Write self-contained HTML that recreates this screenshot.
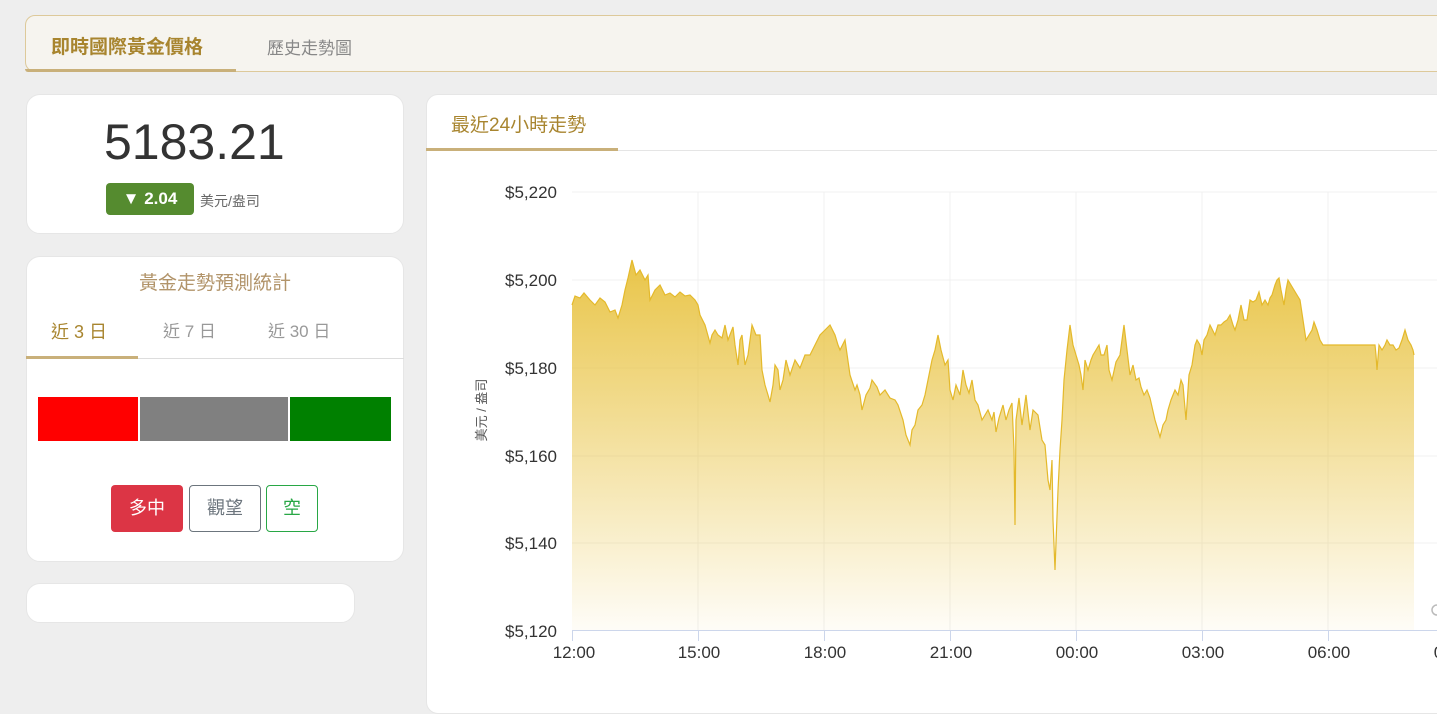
<!DOCTYPE html>
<html><head><meta charset="utf-8"><style>
*{box-sizing:border-box;margin:0;padding:0}
body{width:1437px;height:685px;overflow:hidden;background:#eeeeee;font-family:"Liberation Sans","Noto Sans CJK TC",sans-serif;position:relative}
.abs{position:absolute}
.card{position:absolute;background:#fff;border-radius:14px;border:1px solid #e6e6e6}
</style></head><body>
<div class="abs" style="left:25px;top:15px;width:1440px;height:57px;background:#f6f4ef;border:1px solid #ddc99a;border-radius:10px"></div>
<div class="abs" style="left:25px;top:69px;width:211px;height:3px;background:#c9b07a;border-radius:0 0 0 8px"></div>
<div class="abs" style="left:51px;top:32px;font-size:19px;font-weight:bold;color:#a8852f">即時國際黃金價格</div>
<div class="abs" style="left:267px;top:34px;font-size:17px;color:#888">歷史走勢圖</div>

<div class="card" style="left:26px;top:94px;width:378px;height:140px"></div>
<div class="abs" style="left:104px;top:113px;font-size:50px;color:#333">5183.21</div>
<div class="abs" style="left:106px;top:183px;width:88px;height:32px;background:#558b2f;border-radius:4px;color:#fff;font-weight:bold;font-size:17px;line-height:32px;text-align:center">▼ 2.04</div>
<div class="abs" style="left:200px;top:191px;font-size:14px;color:#666">美元/盎司</div>

<div class="card" style="left:26px;top:256px;width:378px;height:306px"></div>
<div class="abs" style="left:26px;top:268px;width:378px;text-align:center;font-size:19px;color:#b2946a">黃金走勢預測統計</div>
<div class="abs" style="left:51px;top:318px;font-size:18px;color:#a8852f">近 3 日</div>
<div class="abs" style="left:163px;top:317px;font-size:17px;color:#999">近 7 日</div>
<div class="abs" style="left:268px;top:317px;font-size:17px;color:#999">近 30 日</div>
<div class="abs" style="left:26px;top:358px;width:378px;height:1px;background:#ddd"></div>
<div class="abs" style="left:26px;top:356px;width:112px;height:3px;background:#c9b07a"></div>
<div class="abs" style="left:38px;top:397px;width:100px;height:44px;background:#f00"></div>
<div class="abs" style="left:140px;top:397px;width:148px;height:44px;background:#808080"></div>
<div class="abs" style="left:290px;top:397px;width:101px;height:44px;background:#008000"></div>
<div class="abs" style="left:111px;top:485px;width:72px;height:47px;background:#dc3545;border-radius:4px;color:#fff;font-size:18px;line-height:47px;text-align:center">多中</div>
<div class="abs" style="left:189px;top:485px;width:72px;height:47px;border:1px solid #6c757d;border-radius:4px;color:#6c757d;font-size:18px;line-height:45px;text-align:center">觀望</div>
<div class="abs" style="left:266px;top:485px;width:52px;height:47px;border:1px solid #28a745;border-radius:4px;color:#28a745;font-size:18px;line-height:45px;text-align:center">空</div>

<div class="card" style="left:26px;top:583px;width:329px;height:40px"></div>

<div class="card" style="left:426px;top:94px;width:1030px;height:620px;border-radius:12px"></div>
<div class="abs" style="left:451px;top:110px;font-size:19px;color:#a8852f">最近24小時走勢</div>
<div class="abs" style="left:427px;top:150px;width:1010px;height:1px;background:#e5e5e5"></div>
<div class="abs" style="left:426px;top:148px;width:192px;height:3px;background:#c9b07a"></div>

<svg class="abs" style="left:0;top:0" width="1437" height="685" font-family="Liberation Sans, sans-serif">
<defs><linearGradient id="g" gradientUnits="userSpaceOnUse" x1="0" y1="260" x2="0" y2="630"><stop offset="0" stop-color="#e8c23f" stop-opacity="0.95"/><stop offset="1" stop-color="#e8c23f" stop-opacity="0.04"/></linearGradient></defs>
<g stroke="#f0f0f0" stroke-width="1">
<line x1="572" y1="192" x2="1437" y2="192"/><line x1="572" y1="280" x2="1437" y2="280"/><line x1="572" y1="368" x2="1437" y2="368"/><line x1="572" y1="456" x2="1437" y2="456"/><line x1="572" y1="543" x2="1437" y2="543"/>
<line x1="698" y1="192" x2="698" y2="630"/><line x1="824" y1="192" x2="824" y2="630"/><line x1="950" y1="192" x2="950" y2="630"/><line x1="1076" y1="192" x2="1076" y2="630"/><line x1="1202" y1="192" x2="1202" y2="630"/><line x1="1328" y1="192" x2="1328" y2="630"/>
</g>
<polygon fill="url(#g)" points="572,630 572,305 575,296 580,298 584,293 590,300 595,305 600,298 605,302 610,312 615,310 618,318 622,305 625,290 628,278 632,260 636,275 640,270 645,280 648,275 650,300 655,290 660,285 665,295 670,293 675,297 680,292 685,296 690,295 695,300 698,305 700,315 705,325 710,343 712,335 715,330 718,335 722,338 725,325 728,340 733,327 735,345 738,365 740,340 742,335 745,365 748,355 752,325 756,335 760,335 762,370 765,385 768,395 770,402 773,385 775,365 778,370 780,390 783,380 786,360 790,375 795,360 800,368 805,355 810,355 815,345 820,335 825,330 830,325 835,335 838,345 840,350 845,340 850,375 855,390 857,385 860,395 862,410 866,395 870,388 872,380 877,387 880,395 885,390 890,398 895,400 898,405 903,420 906,435 910,445 912,430 915,425 918,410 922,405 925,395 928,380 932,360 935,350 938,335 941,350 945,365 948,360 950,390 953,400 956,385 960,395 963,370 966,385 969,393 972,380 975,400 978,405 982,420 985,415 988,410 992,420 994,412 996,432 999,418 1003,405 1006,420 1009,410 1012,403 1014,450 1015,525 1016,420 1019,398 1022,425 1024,410 1026,395 1030,430 1033,410 1038,415 1042,440 1045,445 1048,480 1050,490 1052,460 1053,520 1055,570 1058,490 1060,450 1062,420 1064,380 1067,350 1070,325 1073,345 1076,355 1079,365 1081,375 1083,390 1085,360 1088,370 1091,360 1093,355 1096,350 1099,345 1101,355 1104,355 1107,345 1109,370 1112,380 1116,362 1120,355 1122,340 1124,325 1127,350 1130,375 1133,365 1136,380 1139,378 1141,387 1144,395 1147,390 1150,398 1155,420 1158,430 1160,437 1163,425 1166,420 1168,410 1171,400 1175,390 1178,395 1181,380 1183,385 1186,420 1189,375 1192,365 1195,345 1197,340 1200,345 1202,355 1204,340 1207,335 1210,325 1215,335 1218,325 1221,325 1224,322 1227,320 1230,315 1233,325 1235,330 1238,320 1241,305 1244,320 1247,320 1250,300 1253,302 1256,300 1259,292 1262,305 1265,300 1268,305 1270,298 1272,295 1275,285 1277,280 1279,278 1281,290 1284,305 1286,290 1288,280 1291,285 1294,290 1297,295 1300,300 1303,320 1306,340 1309,335 1312,330 1314,322 1317,330 1320,340 1323,345 1326,345 1375,345 1376,355 1377,370 1379,345 1382,350 1385,345 1387,340 1390,345 1393,345 1396,350 1399,348 1402,340 1405,330 1408,340 1411,345 1413,350 1414,355 1414,630"/>
<polyline fill="none" stroke="#e4b92b" stroke-width="1.2" points="572,305 575,296 580,298 584,293 590,300 595,305 600,298 605,302 610,312 615,310 618,318 622,305 625,290 628,278 632,260 636,275 640,270 645,280 648,275 650,300 655,290 660,285 665,295 670,293 675,297 680,292 685,296 690,295 695,300 698,305 700,315 705,325 710,343 712,335 715,330 718,335 722,338 725,325 728,340 733,327 735,345 738,365 740,340 742,335 745,365 748,355 752,325 756,335 760,335 762,370 765,385 768,395 770,402 773,385 775,365 778,370 780,390 783,380 786,360 790,375 795,360 800,368 805,355 810,355 815,345 820,335 825,330 830,325 835,335 838,345 840,350 845,340 850,375 855,390 857,385 860,395 862,410 866,395 870,388 872,380 877,387 880,395 885,390 890,398 895,400 898,405 903,420 906,435 910,445 912,430 915,425 918,410 922,405 925,395 928,380 932,360 935,350 938,335 941,350 945,365 948,360 950,390 953,400 956,385 960,395 963,370 966,385 969,393 972,380 975,400 978,405 982,420 985,415 988,410 992,420 994,412 996,432 999,418 1003,405 1006,420 1009,410 1012,403 1014,450 1015,525 1016,420 1019,398 1022,425 1024,410 1026,395 1030,430 1033,410 1038,415 1042,440 1045,445 1048,480 1050,490 1052,460 1053,520 1055,570 1058,490 1060,450 1062,420 1064,380 1067,350 1070,325 1073,345 1076,355 1079,365 1081,375 1083,390 1085,360 1088,370 1091,360 1093,355 1096,350 1099,345 1101,355 1104,355 1107,345 1109,370 1112,380 1116,362 1120,355 1122,340 1124,325 1127,350 1130,375 1133,365 1136,380 1139,378 1141,387 1144,395 1147,390 1150,398 1155,420 1158,430 1160,437 1163,425 1166,420 1168,410 1171,400 1175,390 1178,395 1181,380 1183,385 1186,420 1189,375 1192,365 1195,345 1197,340 1200,345 1202,355 1204,340 1207,335 1210,325 1215,335 1218,325 1221,325 1224,322 1227,320 1230,315 1233,325 1235,330 1238,320 1241,305 1244,320 1247,320 1250,300 1253,302 1256,300 1259,292 1262,305 1265,300 1268,305 1270,298 1272,295 1275,285 1277,280 1279,278 1281,290 1284,305 1286,290 1288,280 1291,285 1294,290 1297,295 1300,300 1303,320 1306,340 1309,335 1312,330 1314,322 1317,330 1320,340 1323,345 1326,345 1375,345 1376,355 1377,370 1379,345 1382,350 1385,345 1387,340 1390,345 1393,345 1396,350 1399,348 1402,340 1405,330 1408,340 1411,345 1413,350 1414,355"/>
<line x1="572" y1="630.5" x2="1437" y2="630.5" stroke="#ccd6eb"/>
<g stroke="#ccd6eb"><line x1="572.5" y1="630" x2="572.5" y2="641"/><line x1="698.5" y1="630" x2="698.5" y2="641"/><line x1="824.5" y1="630" x2="824.5" y2="641"/><line x1="950.5" y1="630" x2="950.5" y2="641"/><line x1="1076.5" y1="630" x2="1076.5" y2="641"/><line x1="1202.5" y1="630" x2="1202.5" y2="641"/><line x1="1328.5" y1="630" x2="1328.5" y2="641"/></g>
<g font-size="17" fill="#333" text-anchor="end">
<text x="557" y="198">$5,220</text><text x="557" y="286">$5,200</text><text x="557" y="374">$5,180</text><text x="557" y="462">$5,160</text><text x="557" y="549">$5,140</text><text x="557" y="637">$5,120</text></g>
<g font-size="17" fill="#333" text-anchor="middle">
<text x="574" y="658">12:00</text><text x="699" y="658">15:00</text><text x="825" y="658">18:00</text><text x="951" y="658">21:00</text><text x="1077" y="658">00:00</text><text x="1203" y="658">03:00</text><text x="1329" y="658">06:00</text><text x="1455" y="658">09:00</text></g>
<text transform="translate(486,410) rotate(-90)" text-anchor="middle" font-size="13" fill="#555" font-family="Liberation Sans, Noto Sans CJK TC, sans-serif">美元 / 盎司</text>
<circle cx="1437" cy="610" r="5" fill="none" stroke="#bbb" stroke-width="1.5"/>
</svg>
</body></html>
